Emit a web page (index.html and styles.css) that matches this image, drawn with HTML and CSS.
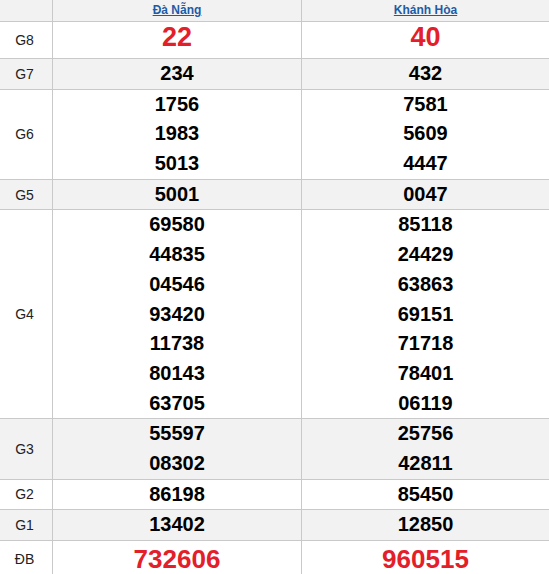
FILE: index.html
```html
<!DOCTYPE html>
<html lang="vi">
<head>
<meta charset="utf-8">
<title>Kết quả xổ số</title>
<link rel="stylesheet" href="styles.css">
</head>
<body>
<table class="results">
  <colgroup>
    <col class="c-label">
    <col class="c-prov">
    <col class="c-prov2">
  </colgroup>
  <thead>
    <tr class="head">
      <th></th>
      <th><a href="#">Đà Nẵng</a></th>
      <th class="last"><a href="#">Khánh Hòa</a></th>
    </tr>
  </thead>
  <tbody>
    <tr class="g8">
      <td class="label">G8</td>
      <td class="num red big">22</td>
      <td class="num red big last">40</td>
    </tr>
    <tr class="alt">
      <td class="label">G7</td>
      <td class="num"><div>234</div></td>
      <td class="num last"><div>432</div></td>
    </tr>
    <tr>
      <td class="label">G6</td>
      <td class="num"><div>1756</div><div>1983</div><div>5013</div></td>
      <td class="num last"><div>7581</div><div>5609</div><div>4447</div></td>
    </tr>
    <tr class="alt">
      <td class="label">G5</td>
      <td class="num"><div>5001</div></td>
      <td class="num last"><div>0047</div></td>
    </tr>
    <tr>
      <td class="label">G4</td>
      <td class="num"><div>69580</div><div>44835</div><div>04546</div><div>93420</div><div>11738</div><div>80143</div><div>63705</div></td>
      <td class="num last"><div>85118</div><div>24429</div><div>63863</div><div>69151</div><div>71718</div><div>78401</div><div>06119</div></td>
    </tr>
    <tr class="alt">
      <td class="label">G3</td>
      <td class="num"><div>55597</div><div>08302</div></td>
      <td class="num last"><div>25756</div><div>42811</div></td>
    </tr>
    <tr>
      <td class="label">G2</td>
      <td class="num"><div>86198</div></td>
      <td class="num last"><div>85450</div></td>
    </tr>
    <tr class="alt">
      <td class="label">G1</td>
      <td class="num"><div>13402</div></td>
      <td class="num last"><div>12850</div></td>
    </tr>
    <tr class="db">
      <td class="label">ĐB</td>
      <td class="num red special">732606</td>
      <td class="num red special last">960515</td>
    </tr>
  </tbody>
</table>
</body>
</html>
```
FILE: styles.css
```css
html, body {
  margin: 0;
  padding: 0;
  background: #ffffff;
  overflow: hidden;
}

body {
  font-family: "Liberation Sans", Arial, sans-serif;
  color: #111;
}

.results {
  width: 549px;
  table-layout: fixed;
  border-collapse: separate;
  border-spacing: 0;
}

.c-label { width: 53px; }
.c-prov { width: 249px; }
.c-prov2 { width: 247px; }

.results th,
.results td {
  padding: 0;
  border-right: 1px solid #c9c9c9;
  border-bottom: 1px solid #c9c9c9;
  text-align: center;
  vertical-align: middle;
}

.results th.last,
.results td.last {
  border-right: none;
}

.head th {
  height: 21px;
  background: #f2f2f2;
  font-size: 12px;
  line-height: 21px;
  font-weight: bold;
}

.head a {
  color: #1d5ba6;
  text-decoration: underline;
}

.alt td {
  background: #f2f2f2;
}

.label {
  font-size: 14px;
  color: #222;
  padding-right: 3px !important;
}

.num {
  font-size: 20px;
  font-weight: bold;
  color: #000;
  line-height: 29.6875px;
}

.red {
  color: #e3202a;
}

.big {
  font-size: 27px;
  line-height: 31px;
  height: 36px;
  padding-bottom: 5px !important;
  box-sizing: border-box;
}

.g8 td.label {
  height: 36px;
}

.special {
  font-size: 26px;
  line-height: 29px;
  padding-top: 4px !important;
}

.db td.label {
  padding-top: 4px !important;
  line-height: 29px;
}
```
